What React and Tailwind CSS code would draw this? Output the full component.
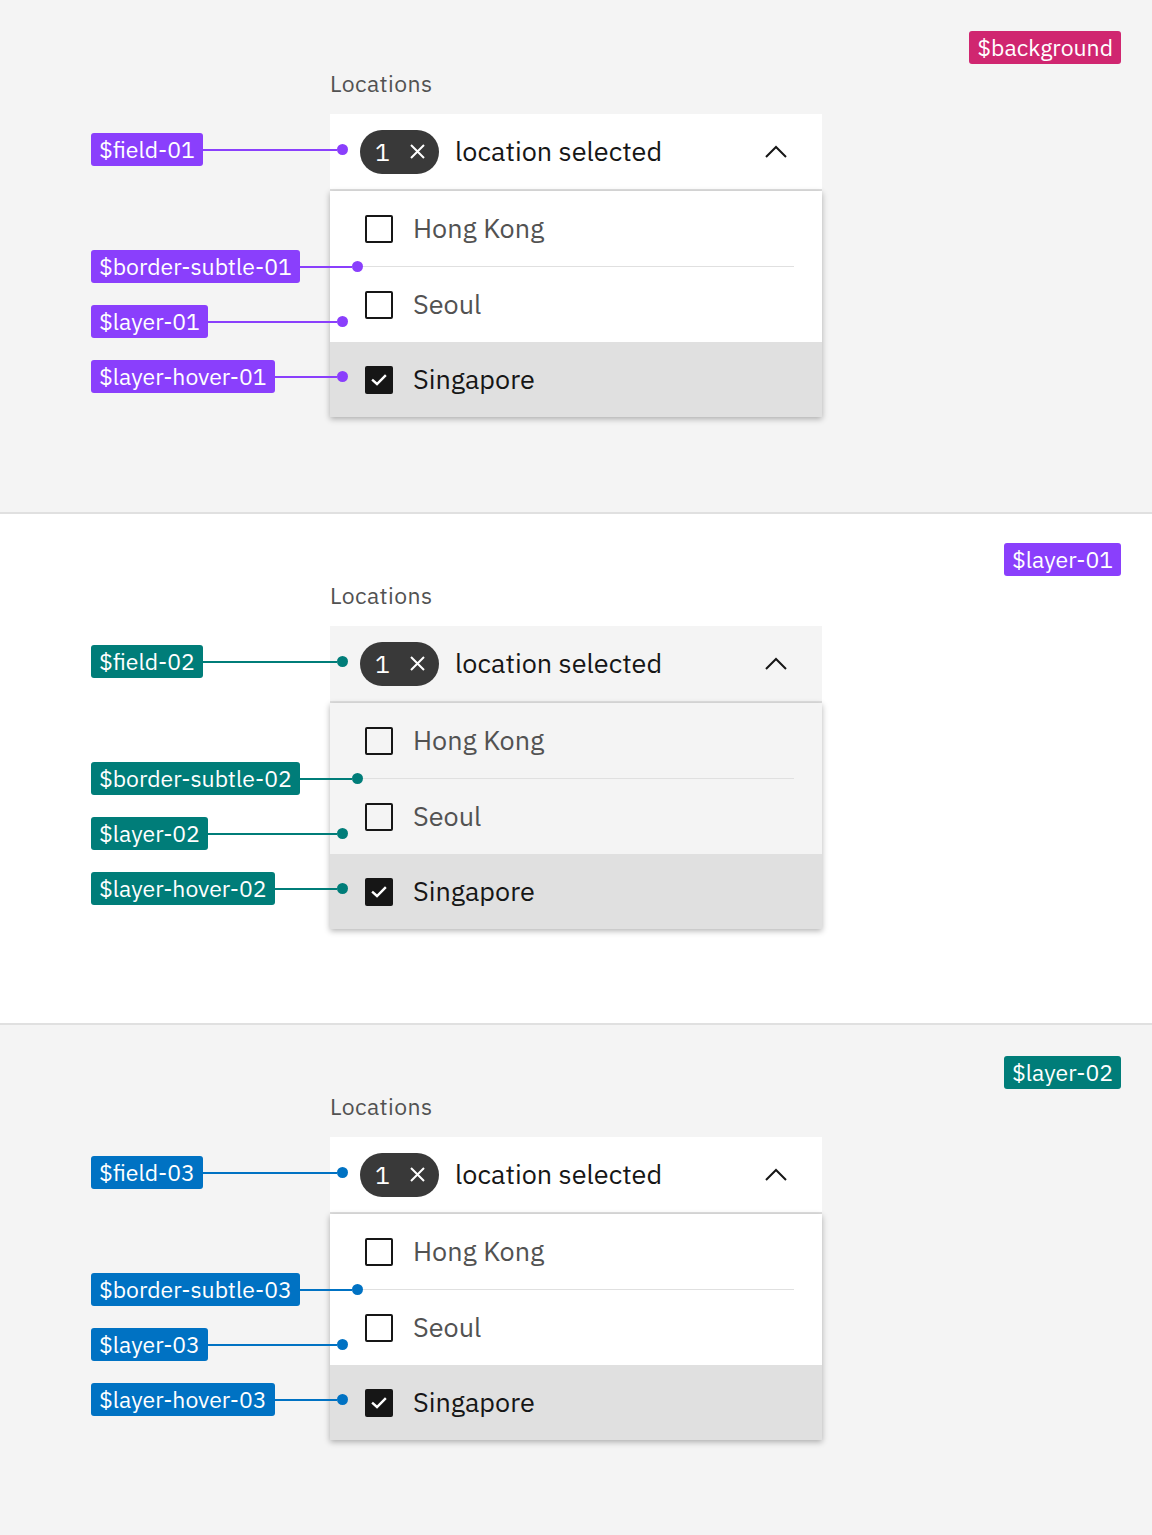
import React from "react";

function Tag({ bg, children }) {
  return (
    <div
      className={
        "h-[33px] px-[8px] rounded-[3px] flex items-center text-white text-[23px] leading-none whitespace-nowrap shrink-0 " +
        bg
      }
    >
      {children}
    </div>
  );
}

function Annotation({ t, label, pos }) {
  return (
    <div className={"absolute left-[-239px] flex items-center z-10 " + pos}>
      <Tag bg={t.tag}>{label}</Tag>
      <div className={"flex-1 h-[2px] " + t.tag} />
      <div className={"w-[11px] h-[11px] rounded-full shrink-0 " + t.tag} />
    </div>
  );
}

function Checkbox({ checked }) {
  return checked ? (
    <div className="w-[28px] h-[28px] rounded-[2px] bg-[#161616] flex items-center justify-center shrink-0">
      <svg width="18" height="14" viewBox="0 0 18 14" fill="none">
        <path d="M3 7.5 L7 11 L15 3" stroke="white" strokeWidth="2.4" strokeLinecap="square" />
      </svg>
    </div>
  ) : (
    <div className="w-[28px] h-[28px] rounded-[2px] border-2 border-[#161616] shrink-0" />
  );
}

function Row({ label, checked, bg }) {
  return (
    <div className={"h-[75px] flex items-center pl-[35px] " + bg}>
      <Checkbox checked={checked} />
      <span className={"ml-[20px] text-[27px] " + (checked ? "text-[#161616]" : "text-[#525252]")}>{label}</span>
    </div>
  );
}

function Section({ t }) {
  return (
    <div className={"relative " + t.section}>
      <div className={"absolute right-[31px] " + t.topTagPos}>
        <Tag bg={t.topTagBg}>{t.topTag}</Tag>
      </div>
      <div className={"pl-[330px] " + t.pt}>
        <div className="text-[23px] leading-[28px] text-[#525252] tracking-[0.4px]">Locations</div>
        <div className="relative w-[492px] mt-[17px]">
          <Annotation t={t} label={"$field-" + t.suffix} pos="top-[19px] w-[257px]" />
          <Annotation t={t} label={"$border-subtle-" + t.suffix} pos="top-[136px] w-[272px]" />
          <Annotation t={t} label={"$layer-" + t.suffix} pos="top-[191px] w-[257px]" />
          <Annotation t={t} label={"$layer-hover-" + t.suffix} pos="top-[246px] w-[257px]" />

          <div className={"h-[77px] flex items-center pl-[30px] pr-[35px] border-b-2 border-[#e0e0e0] " + t.field}>
            <div className="h-[44px] w-[79px] rounded-full bg-[#393939] flex items-center pl-[15px] text-white text-[25px]">
              <span className="leading-none">1</span>
              <svg className="ml-[19px]" width="17" height="17" viewBox="0 0 17 17" fill="none">
                <path d="M2 2 L15 15 M15 2 L2 15" stroke="white" strokeWidth="2" />
              </svg>
            </div>
            <span className="ml-[16px] text-[27px] text-[#161616] flex-1">location selected</span>
            <svg width="22" height="13" viewBox="0 0 22 13" fill="none">
              <path d="M1 12 L11 2 L21 12" stroke="#161616" strokeWidth="2" />
            </svg>
          </div>
          <div className={"shadow-[0_2px_6px_rgba(0,0,0,0.3)] " + t.field}>
            <Row label="Hong Kong" bg={t.field} />
            <div className="h-[1px] mx-[28px] bg-[#e0e0e0]" />
            <Row label="Seoul" bg={t.field} />
            <Row label="Singapore" checked bg="bg-[#e0e0e0]" />
          </div>
        </div>
      </div>
    </div>
  );
}

const THEMES = [
  {
    section: "h-[514px] bg-[#f4f4f4] border-b-2 border-[#e0e0e0]",
    pt: "pt-[69px]",
    topTagPos: "top-[31px]",
    topTag: "$background",
    topTagBg: "bg-[#d02670]",
    field: "bg-white",
    tag: "bg-[#8a3ffc]",
    suffix: "01",
  },
  {
    section: "h-[511px] bg-white border-b-2 border-[#e0e0e0]",
    pt: "pt-[67px]",
    topTagPos: "top-[29px]",
    topTag: "$layer-01",
    topTagBg: "bg-[#8a3ffc]",
    field: "bg-[#f4f4f4]",
    tag: "bg-[#007d79]",
    suffix: "02",
  },
  {
    section: "h-[510px] bg-[#f4f4f4]",
    pt: "pt-[67px]",
    topTagPos: "top-[31px]",
    topTag: "$layer-02",
    topTagBg: "bg-[#007d79]",
    field: "bg-white",
    tag: "bg-[#0072c3]",
    suffix: "03",
  },
];

export default function App() {
  return (
    <div className="w-[1152px] min-h-[1535px] font-['IBM_Plex_Sans','Noto_Sans',sans-serif]">
      {THEMES.map((t) => (
        <Section key={t.suffix} t={t} />
      ))}
    </div>
  );
}
